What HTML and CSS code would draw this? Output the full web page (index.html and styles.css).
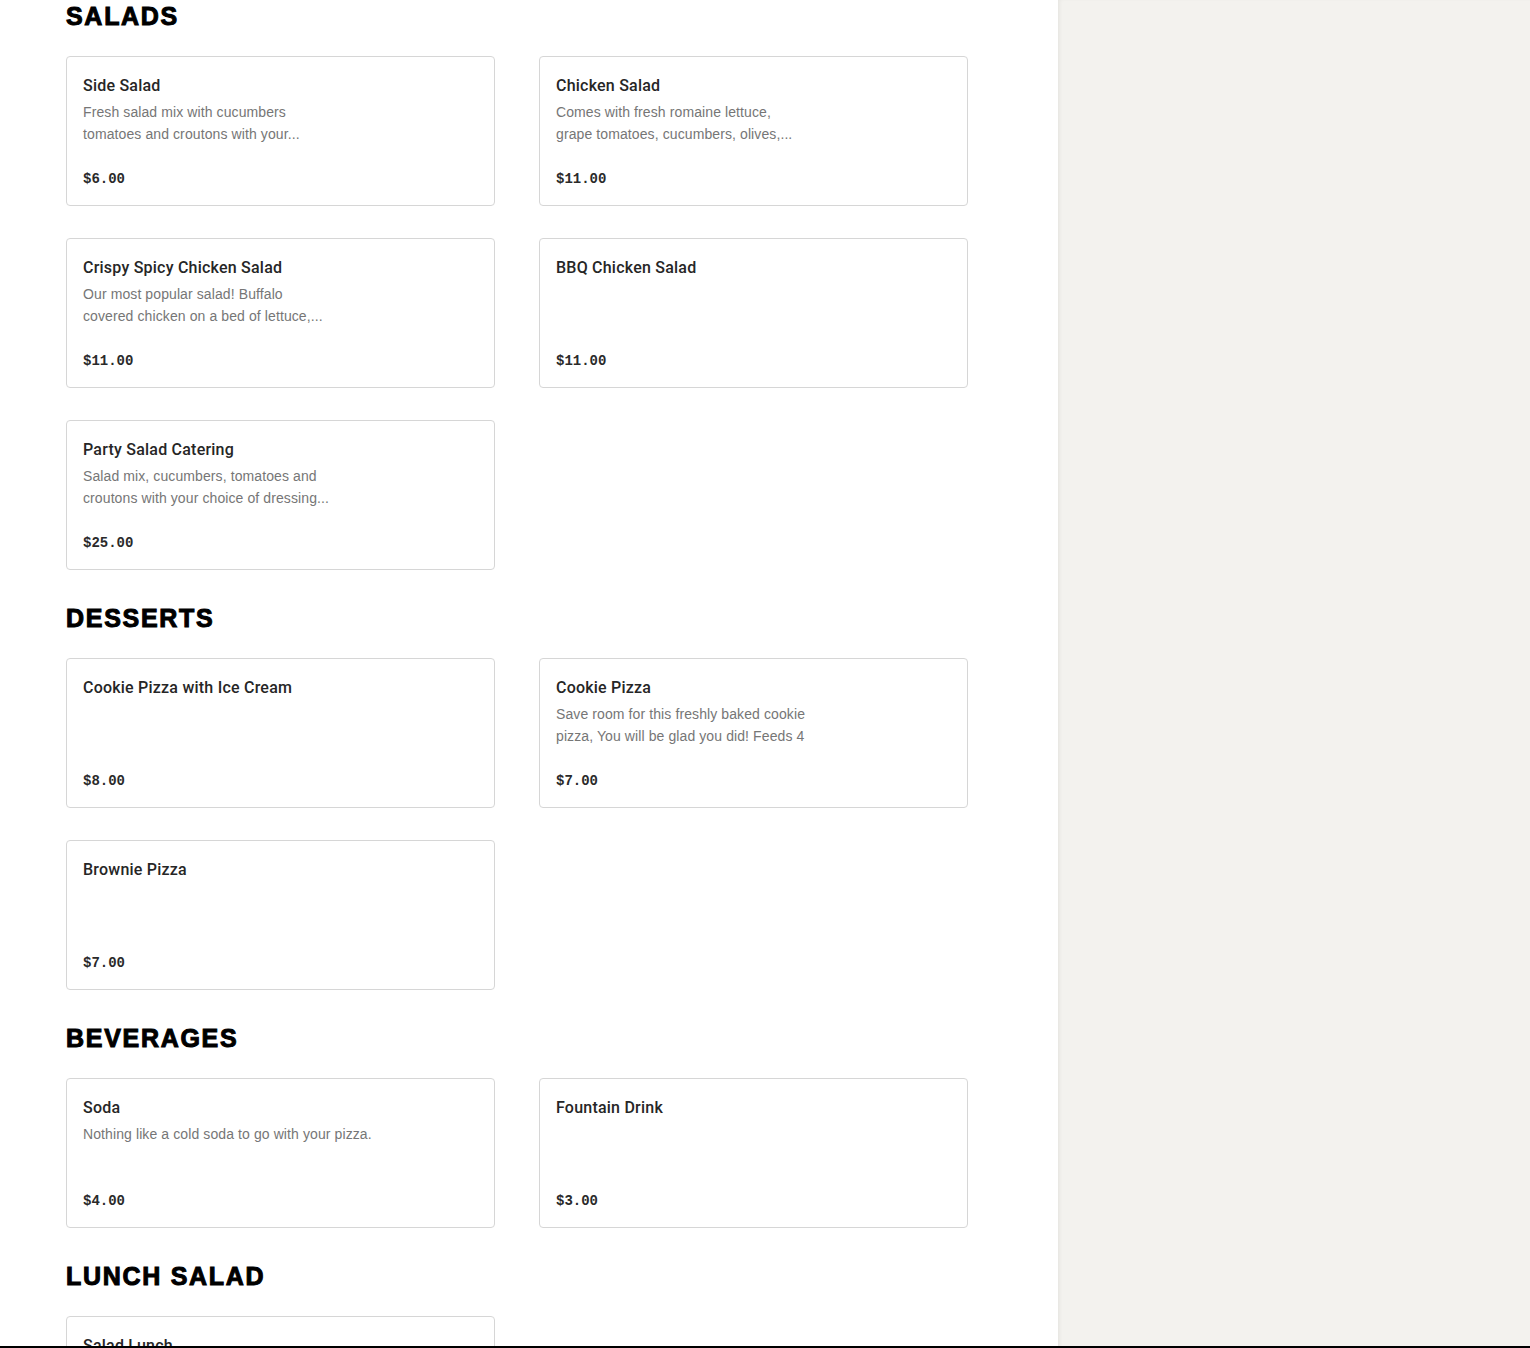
FILE: index.html
```html
<!DOCTYPE html>
<html>
<head>
<meta charset="utf-8">
<link rel="stylesheet" href="styles.css">
</head>
<body>
<div class="layout">
  <main class="menu">
    <section class="category">
      <h2 class="category-title">SALADS</h2>
      <div class="grid">
        <div class="card">
          <div class="item-name">Side Salad</div>
          <div class="item-desc">Fresh salad mix with cucumbers<br>tomatoes and croutons with your...</div>
          <div class="item-price">$6.00</div>
        </div>
        <div class="card">
          <div class="item-name">Chicken Salad</div>
          <div class="item-desc">Comes with fresh romaine lettuce,<br>grape tomatoes, cucumbers, olives,...</div>
          <div class="item-price">$11.00</div>
        </div>
        <div class="card">
          <div class="item-name">Crispy Spicy Chicken Salad</div>
          <div class="item-desc">Our most popular salad! Buffalo<br>covered chicken on a bed of lettuce,...</div>
          <div class="item-price">$11.00</div>
        </div>
        <div class="card">
          <div class="item-name">BBQ Chicken Salad</div>
          <div class="item-price">$11.00</div>
        </div>
        <div class="card">
          <div class="item-name">Party Salad Catering</div>
          <div class="item-desc">Salad mix, cucumbers, tomatoes and<br>croutons with your choice of dressing...</div>
          <div class="item-price">$25.00</div>
        </div>
      </div>
    </section>
    <section class="category">
      <h2 class="category-title">DESSERTS</h2>
      <div class="grid">
        <div class="card">
          <div class="item-name">Cookie Pizza with Ice Cream</div>
          <div class="item-price">$8.00</div>
        </div>
        <div class="card">
          <div class="item-name">Cookie Pizza</div>
          <div class="item-desc">Save room for this freshly baked cookie<br>pizza, You will be glad you did! Feeds 4</div>
          <div class="item-price">$7.00</div>
        </div>
        <div class="card">
          <div class="item-name">Brownie Pizza</div>
          <div class="item-price">$7.00</div>
        </div>
      </div>
    </section>
    <section class="category">
      <h2 class="category-title">BEVERAGES</h2>
      <div class="grid">
        <div class="card">
          <div class="item-name">Soda</div>
          <div class="item-desc">Nothing like a cold soda to go with your pizza.</div>
          <div class="item-price">$4.00</div>
        </div>
        <div class="card">
          <div class="item-name">Fountain Drink</div>
          <div class="item-price">$3.00</div>
        </div>
      </div>
    </section>
    <section class="category">
      <h2 class="category-title">LUNCH SALAD</h2>
      <div class="grid">
        <div class="card">
          <div class="item-name">Salad Lunch</div>
          <div class="item-price">$9.00</div>
        </div>
      </div>
    </section>
  </main>
  <aside class="sidebar"></aside>
</div>
<div class="bottom-bar"></div>
</body>
</html>
```
FILE: styles.css
```css
html, body {
  margin: 0;
  padding: 0;
  height: 100%;
  overflow: hidden;
}
body {
  font-family: "Liberation Sans", Arial, sans-serif;
  background: #ffffff;
  color: #1f1f1f;
}
.layout {
  display: flex;
  min-height: 100%;
}
.menu {
  width: 1058px;
  flex: none;
  padding: 0 90px 0 66px;
  box-sizing: border-box;
  display: flex;
  flex-direction: column;
  gap: 32px;
}
.sidebar {
  flex: 1;
  background: #f3f2ee;
  box-shadow: inset 3px 0 4px -2px rgba(0,0,0,0.07);
}
.category-title {
  margin: 0 0 24px 0;
  font-family: "Liberation Sans", Arial, sans-serif;
  font-weight: 900;
  font-size: 25px;
  line-height: 32px;
  letter-spacing: 1.7px;
  color: #000;
  -webkit-text-stroke: 1px #000;
}
.grid {
  display: grid;
  grid-template-columns: 429px 429px;
  column-gap: 44px;
  row-gap: 32px;
}
.card {
  height: 150px;
  box-sizing: border-box;
  border: 1px solid #d6d6d6;
  border-radius: 4px;
  padding: 17px 16px 15px 16px;
  display: flex;
  flex-direction: column;
}
.item-name {
  font-family: Roboto, "Liberation Sans", sans-serif;
  font-weight: 500;
  font-size: 16px;
  line-height: 24px;
  letter-spacing: 0.22px;
  color: #262626;
}
.item-desc {
  margin-top: 3px;
  font-family: "Liberation Sans", Arial, sans-serif;
  font-size: 14px;
  line-height: 22px;
  letter-spacing: 0.1px;
  color: #767676;
}
.item-price {
  margin-top: auto;
  font-family: "Liberation Mono", monospace;
  font-weight: 700;
  font-size: 14px;
  line-height: 22px;
  color: #2a2a2a;
}
.bottom-bar {
  position: fixed;
  left: 0;
  right: 0;
  bottom: 0;
  height: 2px;
  background: #000;
}
```
